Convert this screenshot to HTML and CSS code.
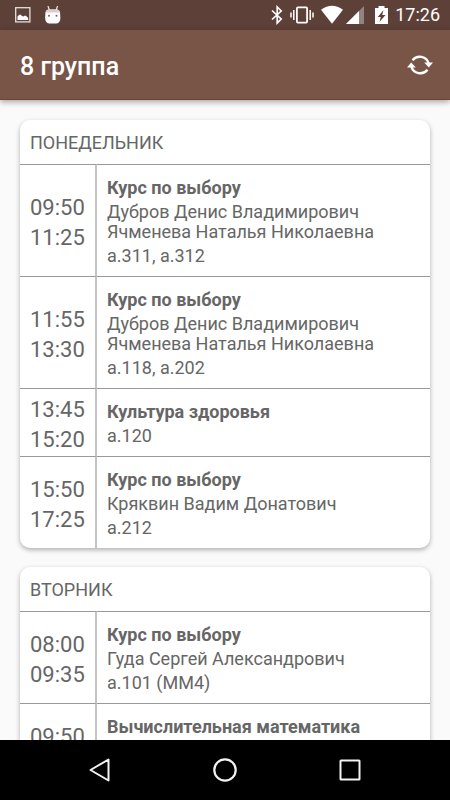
FILE: index.html
```html
<!DOCTYPE html>
<html lang="ru">

<head>
    <meta charset="utf-8">
    <meta name="viewport" content="width=device-width, initial-scale=1">
    <title>8 группа</title>
    <link rel="stylesheet" href="styles.css">
</head>

<body>
    <div class="statusbar">
        <div class="status-icons notifications">
            <svg width="16" height="16" viewBox="0 0 16 16">
                <rect x="0.7" y="0.7" width="14.2" height="14.2" fill="none" stroke="#e6dfdc" stroke-width="1.3" />
                <path d="M2.500 13V9.500L4 8l1.500-.5 1.500 1.500 1.500 .5 1.500-1 1.500.8 1.700 1.700v2z" fill="#fff" />
            </svg>
            <svg width="18" height="18" viewBox="0 0 18 18">
                <path d="M4 0L5.300 4M13.500 0L12.300 4" stroke="#efe9e7" stroke-width="1.200" />
                <path d="M1.500 6.500Q2 3.500 5 3.400h7.500Q15.500 3.500 16 6.500l.4 5.500Q16.300 17 12.500 17.400H5Q1.300 17 1.100 12z" fill="#fff" />
                <path d="M1.500 6.500Q2 3.500 5 3.400h7.500Q15.500 3.500 16 6.500z" fill="#d8cecb" />
                <circle cx="5" cy="9.800" r="1" fill="#77605a" />
                <circle cx="12.500" cy="9.800" r="1" fill="#77605a" />
            </svg>
        </div>
        <div class="status-icons system">
            <svg width="12" height="20" viewBox="0 0 12 20">
                <path d="M1 5.500L10.200 14 6.200 18V2l4 4L1 14.500" fill="none" stroke="#fff" stroke-width="1.700" />
            </svg>
            <svg width="24" height="20" viewBox="0 0 24 20">
                <rect x="6.900" y="2.400" width="10.200" height="15.200" rx="1" fill="none" stroke="#fff" stroke-width="1.800" />
                <path d="M3.800 5v10M20.200 5v10M1 7.500v5M23 7.500v5" stroke="#fff" stroke-width="1.500" />
            </svg>
            <svg width="22" height="20" viewBox="0 0 22 20">
                <path d="M0 4.800Q11-3.500 22 4.800L11 18.800z" fill="#fff" />
            </svg>
            <svg class="signal" width="18" height="20" viewBox="0 0 18 20">
                <path d="M0 19L18 1v18z" fill="#95827c" />
                <path d="M0 19L13 6v13z" fill="#fff" />
            </svg>
            <svg class="battery" width="13" height="20" viewBox="0 0 13 20">
                <path d="M0 3h3.500V1h6v2H13v16H0z" fill="#fff" />
                <path d="M8.500 5L2.800 12h3L4.500 17l6-7H7.200z" fill="#5d4037" />
            </svg>
            <time class="clock">17:26</time>
        </div>
    </div>

    <header class="appbar">
        <h1>8 группа</h1>
        <button class="refresh" type="button" aria-label="Обновить">
            <svg width="26" height="24" viewBox="0 0 26 24">
                <path d="M5.500 7.200A9.300 9.300 0 0 1 21.700 10.500" fill="none" stroke="#fff" stroke-width="2.400" />
                <path d="M20.500 16.800A9.300 9.300 0 0 1 4.300 13.500" fill="none" stroke="#fff" stroke-width="2.400" />
                <path d="M17.200 9.500H26L21.800 14.500z" fill="#fff" />
                <path d="M8.800 14.500H0L4.200 9.500z" fill="#fff" />
            </svg>
        </button>
    </header>

    <main class="schedule">
        <section class="card">
            <h2>ПОНЕДЕЛЬНИК</h2>
            <table>
                <tr>
                    <td class="time">09:50<br>11:25</td>
                    <td class="lesson">
                        <h3>Курс по выбору</h3>
                        <p class="teachers">Дубров Денис Владимирович<br>Ячменева Наталья Николаевна</p>
                        <p class="room">а.311, а.312</p>
                    </td>
                </tr>
                <tr>
                    <td class="time">11:55<br>13:30</td>
                    <td class="lesson">
                        <h3>Курс по выбору</h3>
                        <p class="teachers">Дубров Денис Владимирович<br>Ячменева Наталья Николаевна</p>
                        <p class="room">а.118, а.202</p>
                    </td>
                </tr>
                <tr>
                    <td class="time">13:45<br>15:20</td>
                    <td class="lesson">
                        <h3>Культура здоровья</h3>
                        <p class="room">а.120</p>
                    </td>
                </tr>
                <tr>
                    <td class="time">15:50<br>17:25</td>
                    <td class="lesson">
                        <h3>Курс по выбору</h3>
                        <p class="teachers">Кряквин Вадим Донатович</p>
                        <p class="room">а.212</p>
                    </td>
                </tr>
            </table>
        </section>

        <section class="card">
            <h2>ВТОРНИК</h2>
            <table>
                <tr>
                    <td class="time">08:00<br>09:35</td>
                    <td class="lesson">
                        <h3>Курс по выбору</h3>
                        <p class="teachers">Гуда Сергей Александрович</p>
                        <p class="room">а.101 (ММ4)</p>
                    </td>
                </tr>
                <tr>
                    <td class="time">09:50<br>11:25</td>
                    <td class="lesson">
                        <h3>Вычислительная математика</h3>
                        <p class="teachers">&nbsp;</p>
                        <p class="room">&nbsp;</p>
                    </td>
                </tr>
            </table>
        </section>
    </main>

    <nav class="navbar">
        <button type="button" aria-label="Назад">
            <svg width="26" height="26" viewBox="0 0 26 26">
                <path d="M21.500 2.500v21L3.500 13z" fill="none" stroke="#f2f2f2" stroke-width="2" stroke-linejoin="round" />
            </svg>
        </button>
        <button type="button" aria-label="Домой">
            <svg width="26" height="26" viewBox="0 0 26 26">
                <circle cx="13" cy="13" r="10.700" fill="none" stroke="#f2f2f2" stroke-width="2.200" />
            </svg>
        </button>
        <button type="button" aria-label="Недавние">
            <svg width="26" height="26" viewBox="0 0 26 26">
                <rect x="3.500" y="3.500" width="19" height="19" rx="0.500" fill="none" stroke="#f2f2f2" stroke-width="2" />
            </svg>
        </button>
    </nav>
</body>

</html>
```
FILE: styles.css
```css
* {
    box-sizing: border-box;
}

body {
    display: flex;
    flex-direction: column;
    height: 100vh;
    margin: 0;
    font-family: Roboto, sans-serif;
    color: #666;
    background-color: #fafafa;
}

h1,
h2,
h3,
p {
    margin: 0;
}

button {
    display: flex;
    align-items: center;
    justify-content: center;
    padding: 0;
    border: none;
    background: none;
    cursor: pointer;
}

svg {
    display: block;
}

/* status bar */
.statusbar {
    display: flex;
    flex: none;
    justify-content: space-between;
    align-items: center;
    height: 30px;
    padding: 0 10px 0 15px;
    color: #fff;
    background-color: #5d4037;
}

.status-icons {
    display: flex;
    align-items: center;
}

.notifications {
    gap: 13px;
}

.system {
    gap: 7px;
}

.signal {
    margin-left: -4px;
}

.battery {
    margin-left: 4px;
}

.clock {
    font-size: 18px;
    line-height: 30px;
}

/* app bar */
.appbar {
    position: relative;
    display: flex;
    flex: none;
    justify-content: space-between;
    align-items: center;
    height: 70px;
    padding: 0 17px 0 20px;
    color: #fff;
    background-color: #795548;
    border-bottom: 1px solid #6d4430;
    box-shadow: 0 2px 6px rgba(0, 0, 0, 0.35);
}

.appbar h1 {
    padding-top: 4px;
    font-size: 25px;
    font-weight: 500;
    line-height: 32px;
}

/* schedule */
.schedule {
    flex: 1;
    min-height: 0;
    padding: 20px;
    overflow-y: auto;
    scrollbar-width: none;
}

.card {
    margin-bottom: 19px;
    border-radius: 10px;
    background-color: #fff;
    box-shadow: 0 2px 5px rgba(0, 0, 0, 0.3);
}

.card h2 {
    height: 44px;
    padding: 0 10px;
    font-size: 18px;
    font-weight: 400;
    line-height: 45px;
}

.card table {
    width: 100%;
    border-spacing: 0;
}

.card td {
    border-top: 1px solid #999;
}

.card .time {
    width: 77px;
    padding: 4px 0 0 10px;
    border-right: 2px solid #c4c4c4;
    font-size: 22px;
    line-height: 30px;
}

.lesson {
    padding: 11px 10px 8px;
    font-size: 18px;
}

.lesson h3 {
    font-size: 18px;
    font-weight: 700;
    line-height: 24px;
}

.teachers {
    margin: 2px 0;
    line-height: 20px;
}

.room {
    line-height: 24px;
}

/* navigation bar */
.navbar {
    display: flex;
    flex: none;
    justify-content: center;
    height: 60px;
    background-color: #000;
}

.navbar button {
    width: 125px;
}
```
